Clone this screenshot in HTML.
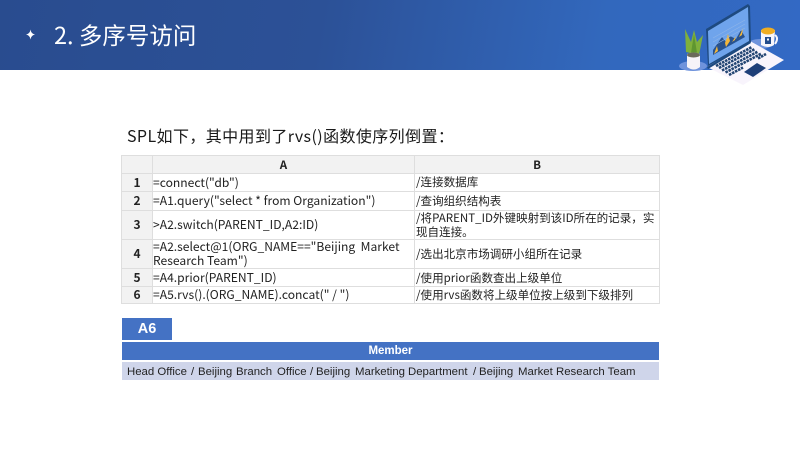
<!DOCTYPE html>
<html><head><meta charset="utf-8"><style>
html,body{margin:0;padding:0;background:#fff}
#p{position:relative;width:800px;height:450px;overflow:hidden;background:#fff;font-family:"Noto Sans CJK SC","Liberation Sans",sans-serif;color:#222}
.a{position:absolute}
.c{position:absolute;box-sizing:border-box;font-size:11.55px;line-height:14px;padding-left:1px;display:flex;align-items:center;white-space:pre-wrap;color:#222;background:#fff;border-right:1px solid #dedede;border-bottom:1px solid #dedede}
.l{font-size:12.1px;padding-left:0}
.h{background:#f2f2f2;font-weight:700;justify-content:center;padding:0}
.m{position:absolute;top:363px;font:11.4px/18px 'Liberation Sans',sans-serif;color:#222;white-space:pre}
</style></head><body><div id="p">
<div class="a" style="left:0;top:0;width:800px;height:70px;background:linear-gradient(100deg,#294c8f 0%,#2c5197 40%,#3268bd 75%,#3369c4 100%)"></div>
<svg class="a" style="left:24px;top:28px" width="13" height="13" viewBox="0 0 13 13"><path d="M6.5 1.5Q7 5.7 11 6.5Q7 7.3 6.5 11.5Q6 7.3 2 6.5Q6 5.7 6.500 1.500Z" fill="#fff"/></svg>
<div class="a" style="left:54px;top:17px;font-size:23.500px;line-height:34px;color:#fff;white-space:nowrap">2. 多序号访问</div>

<svg class="a" style="left:670px;top:0" width="130" height="90" viewBox="670 0 130 90">
<ellipse cx="693" cy="66" rx="14" ry="5" fill="#6f93dc"/>
<path d="M686 52L685 29L691 42L694 30L697 42L703 35L699 55Z" fill="#7fb03c"/>
<path d="M691 53L694 34L697 53Z" fill="#5f9630"/>
<path d="M687 54Q694 51 700 54L700 67Q694 72 687 67Z" fill="#f6f3f8"/>
<ellipse cx="693.500" cy="55" rx="6.500" ry="2.500" fill="#6b6a5a"/>
<ellipse cx="760" cy="44" rx="12" ry="5" fill="#6f93dc"/>
<path d="M707 67L750 41L784 60L743 85Z" fill="#f8f4fc"/>
<path d="M707 67L750 41L751 43L708 69Z" fill="#1e4a80"/>
<path d="M706 29L748 4L750 6L751 42L708 66Z" fill="#1e4a80"/>
<path d="M708 31L748 7L749 41L709 64Z" fill="#6fa4ec"/>
<path d="M713 50L722 37L726 42L730 36L736 39L741 30L745 37L713 55Z" fill="#28528f"/>
<path d="M714 54L717 46L718 51ZM725 43L728 34L730 41L726 47ZM732 42L736 36L735 40ZM739 37L743 28L742 35Z" fill="#f2b63a"/>
<path d="M713 38L745 20M713 42L745 24M713 46L745 28" stroke="#8fb5e8" stroke-width=".6" fill="none"/>
<g stroke="#234573" stroke-width="2.600" stroke-dasharray="2.600 .8" fill="none">
<path d="M716 66L752 47"/>
<path d="M719 68L755 49"/>
<path d="M722 70.500L758 51.500"/>
<path d="M725.500 72.500L761.500 53.500"/>
<path d="M729 75L743 67.500"/>
<path d="M758 58.500L766 54"/>
</g>
<path d="M744 72L757 63L766 68L753 77Z" fill="#1e3f78"/>
<path d="M761 30L761 45Q768 49 774 45L775 30Z" fill="#f8f6fb"/>
<ellipse cx="768" cy="31" rx="7" ry="3.500" fill="#f0ad22"/>
<path d="M775 35Q779 38 775 44" stroke="#f8f6fb" stroke-width="2" fill="none"/>
<rect x="765" y="37" width="6" height="7" fill="#234c8c"/>
<rect x="767" y="38.500" width="2" height="2" fill="#f8f6fb"/>
</svg>

<div class="a" style="left:127px;top:122px;font-size:16px;letter-spacing:.4px;line-height:26px;color:#1a1a1a;white-space:nowrap">SPL如下，其中用到了rvs()函数使序列倒置：</div>

<div class="a" style="left:121px;top:155px;width:539px;height:149px;box-sizing:border-box;border-top:1px solid #dedede;border-left:1px solid #dedede"></div>
<div class="c h" style="left:122px;top:156px;width:31px;height:18px"></div>
<div class="c h" style="left:153px;top:156px;width:262px;height:18px">A</div>
<div class="c h" style="left:415px;top:156px;width:245px;height:18px">B</div>

<div class="c h" style="left:122px;top:174px;width:31px;height:18px;font-size:12px">1</div>
<div class="c l" style="left:153px;top:174px;width:262px;height:18px">=connect("db")</div>
<div class="c" style="left:415px;top:174px;width:245px;height:18px;padding-bottom:1px">/连接数据库</div>

<div class="c h" style="left:122px;top:192px;width:31px;height:19px;font-size:12px">2</div>
<div class="c l" style="left:153px;top:192px;width:262px;height:19px">=A1.query("select * from Organization")</div>
<div class="c" style="left:415px;top:192px;width:245px;height:19px">/查询组织结构表</div>

<div class="c h" style="left:122px;top:211px;width:31px;height:29px;font-size:12px">3</div>
<div class="c l" style="left:153px;top:211px;width:262px;height:29px">&gt;A2.switch(PARENT_ID,A2:ID)</div>
<div class="c" style="left:415px;top:211px;width:245px;height:29px">/将PARENT_ID外键映射到该ID所在的记录，实现自连接。</div>

<div class="c h" style="left:122px;top:240px;width:31px;height:29px;font-size:12px">4</div>
<div class="c l" style="left:153px;top:240px;width:262px;height:29px">=A2.select@1(ORG_NAME=="Beijing  Market Research Team")</div>
<div class="c" style="left:415px;top:240px;width:245px;height:29px">/选出北京市场调研小组所在记录</div>

<div class="c h" style="left:122px;top:269px;width:31px;height:18px;font-size:12px">5</div>
<div class="c l" style="left:153px;top:269px;width:262px;height:18px">=A4.prior(PARENT_ID)</div>
<div class="c" style="left:415px;top:269px;width:245px;height:18px">/使用prior函数查出上级单位</div>

<div class="c h" style="left:122px;top:287px;width:31px;height:17px;font-size:12px">6</div>
<div class="c l" style="left:153px;top:287px;width:262px;height:17px">=A5.rvs().(ORG_NAME).concat(" / ")</div>
<div class="c" style="left:415px;top:287px;width:245px;height:17px">/使用rvs函数将上级单位按上级到下级排列</div>

<div class="a" style="left:122px;top:318px;width:50px;height:22px;background:#4472c4;color:#fff;font:700 14.500px/23px 'Liberation Sans',sans-serif;text-align:center">A6</div>
<div class="a" style="left:122px;top:342px;width:537px;height:18px;background:#4472c4;color:#fff;font:700 11.500px/19px 'Liberation Sans',sans-serif;text-align:center">Member</div>
<div class="a" style="left:122px;top:362px;width:537px;height:18px;background:#cfd5ea"></div>
<span class="m" style="left:127px">Head Office</span><span class="m" style="left:191px">/</span><span class="m" style="left:198px">Beijing</span><span class="m" style="left:236px">Branch</span><span class="m" style="left:277px">Office</span><span class="m" style="left:310px">/</span><span class="m" style="left:316px">Beijing</span><span class="m" style="left:355px">Marketing</span><span class="m" style="left:408px">Department</span><span class="m" style="left:473px">/</span><span class="m" style="left:479px">Beijing</span><span class="m" style="left:518px">Market Research Team</span>
</div></body></html>
